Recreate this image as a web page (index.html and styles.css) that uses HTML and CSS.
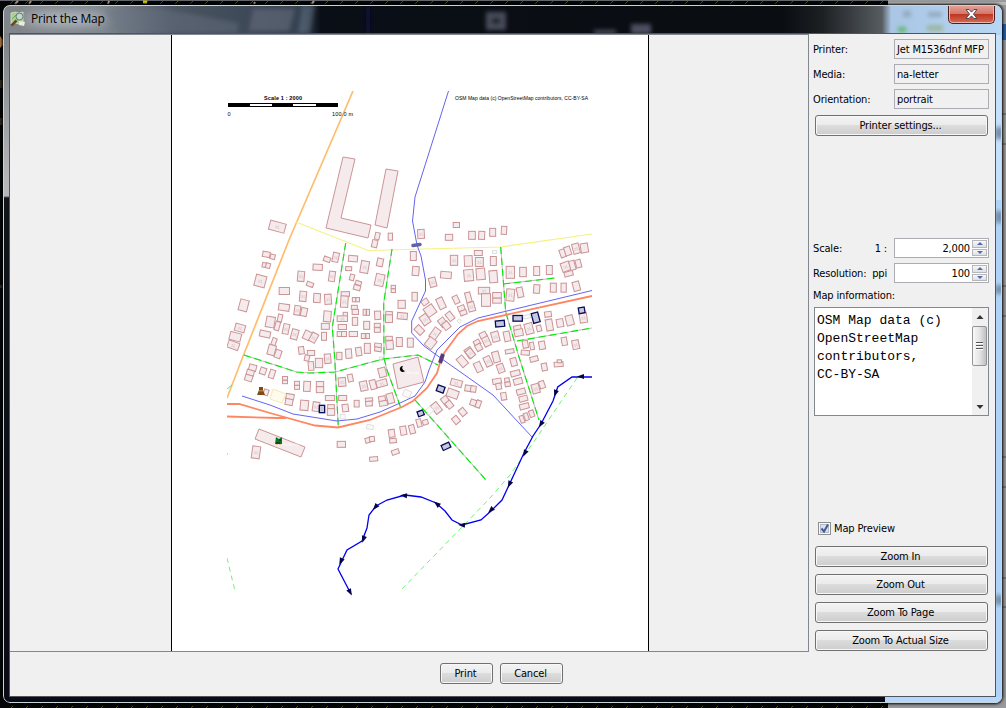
FILE: index.html
```html
<!DOCTYPE html>
<html lang="en">
<head>
<meta charset="utf-8">
<title>Print the Map</title>
<link rel="stylesheet" href="styles.css">
</head>
<body>
<div class="desktop">
  <svg class="backdrop" width="1006" height="708">
    <defs>
      <pattern id="ticks" width="15" height="5" patternUnits="userSpaceOnUse"><path d="M10 4L13 1" stroke="#55551c"/></pattern>
    </defs>
    <rect width="1006" height="708" fill="#050607"/>
    <rect width="888" height="5" fill="url(#ticks)"/><rect y="703" width="888" height="5" fill="url(#ticks)"/>
    <path d="M0 .5H1006" stroke="#62666a"/>
    <path d="M15 4l3-3M29 4l2-3M108 4l1-3M254 4l1-2M312 4l2-3" stroke="#b89a80" stroke-width="2"/><path d="M143 2h4" stroke="#d4c500" stroke-width="3"/>
    <rect x="888" y="0" width="118" height="708" fill="#98999c"/>
    <rect x="888" y="2" width="118" height="3" fill="#b9b9b9"/>
    <rect x="1002" y="24" width="4" height="16" fill="#2460a5"/>
    <path d="M0 36l3 4v5l-3 3z" fill="#b07945"/>
    <path d="M0 80h3v8H0zM0 118h3v7H0zM0 285h3v3H0z" fill="#302b20"/>
    <path d="M1002 114h4M1002 144h4M1002 286h4M1002 316h4M1002 457h4M1002 487h4M1002 578h4M1002 607h4" stroke="#555"/>
  </svg>
  <div class="window">
    <svg class="glass" width="999" height="698">
      <defs>
        <linearGradient id="title" x2="1"><stop offset="0" stop-color="#81868a"/><stop offset=".1" stop-color="#7d858d"/><stop offset=".17" stop-color="#4c5561"/><stop offset=".22" stop-color="#424d5b"/><stop offset=".3" stop-color="#344150"/><stop offset=".318" stop-color="#0a0f17"/><stop offset=".78" stop-color="#0a0d11"/><stop offset=".82" stop-color="#1d2023"/><stop offset=".88" stop-color="#585d62"/><stop offset=".889" stop-color="#a9c6e4"/><stop offset="1" stop-color="#b8d7f5"/></linearGradient>
        <linearGradient id="side" x2="0" y2="1"><stop offset="0" stop-color="#7c8285"/><stop offset=".22" stop-color="#b4b6b8"/><stop offset=".245" stop-color="#b4b6b8"/><stop offset=".248" stop-color="#11151a"/><stop offset="1" stop-color="#0a0a16"/></linearGradient>
        <filter id="blur" x="-50%" y="-50%" width="200%" height="200%"><feGaussianBlur stdDeviation="2"/></filter>
        <filter id="haze" x="-50%" y="-50%" width="200%" height="200%"><feGaussianBlur stdDeviation="6"/></filter>
      </defs>
      <rect width="999" height="698" fill="#0b0a17"/>
      <rect width="999" height="30" fill="url(#title)"/>
      <ellipse cx="62" cy="14" rx="42" ry="7" fill="#c4cad0" opacity=".8" filter="url(#haze)"/>
      <g filter="url(#blur)">
        <path d="M160 4L235 18V28H120L100 5z" fill="#6c7587" opacity=".4"/>
        <path d="M250 4h42l-6 22h-40z" fill="#7c8091" opacity=".4"/>
        <path d="M300 0h12l-5 28h-12z" fill="#66788a" opacity=".5"/>
        <rect x="486" y="10" width="14" height="12" fill="#1f222c" stroke="#474b5a" stroke-width="6"/>
        <path d="M591 25h22v4h-22zM628 19h20v10h-20z" fill="#4c5060"/>
        <path d="M365 2v26" stroke="#0d1038" stroke-width="4"/>
        <path d="M900 6h8v6h-8zM925 7h14v5h-14z" fill="#93a8bd"/><path d="M895 22h8v5h-8z" fill="#62b66d"/><path d="M924 20h16v6h-16z" fill="#9cb69e"/>
      </g>
      <rect y="28" width="6" height="665" fill="url(#side)"/>
      <rect x="992" y="28" width="8" height="671" fill="#afd3f8"/>
      <rect x="992" y="30" width="8" height="165" fill="#c5e0fa"/>
      <rect x="882" y="692" width="118" height="7" fill="#b4d7fb"/>
      <g filter="url(#blur)" fill="#758da9"><path d="M992 122h8v12h-8zM992 206h8v12h-8zM992 280h8v9h-8zM992 590h8v10h-8z"/></g>
    </svg>
    <header class="titlebar">
      <svg class="app-icon" width="16" height="16" viewBox="0 0 16 16"><path d="M1 2l4-1 4 1 4-1v11l-4 1-4-1-4 1z" fill="#a9cf92" stroke="#e0ead2" stroke-width=".7"/><path d="M2 8l6-6M5 12L12 3" stroke="#6daa58"/><path d="M9 10l6 1-1 4-5-1z" fill="#eee8df"/><circle cx="9.5" cy="5.5" r="3.5" fill="#bcdcc9" stroke="#66777a" stroke-width="1"/><path d="M6.500 9.500l-5 5" stroke="#6e4525" stroke-width="2.500"/></svg>
      <span class="title">Print the Map</span>
      <button class="close" aria-label="Close"><svg width="13" height="12" viewBox="0 0 13 12"><path d="M1 1.500h3l2.500 2.600L9 1.500h3L8.500 6l3.500 4.500H9L6.500 7.900 4 10.500H1L4.500 6z" fill="#fff" stroke="#4c4c58" stroke-width="1"/></svg></button>
    </header>
    <main class="content">
      <div class="upper">
        <section class="preview">
          <div class="paper">
            <svg class="map" viewBox="172 35 476 616" width="476" height="616">
              <defs><clipPath id="sheet"><path d="M227 91H592V596H227z"/></clipPath></defs>
              <g clip-path="url(#sheet)" fill="none">
                <g id="buildings"></g>
                <path d="M343 157L355 159 341 218 371 225 368 238 326 228zM386 169L398 171 387 228 375 225zM259 429L305 447 301 457 255 439zM393 364L418 357 424 382 398 389z" class="house"/>
                <path d="M273 389L286 394 282 403 270 399z" stroke="#f3eab6" fill="#fffbed"/>
                <path d="M353 91L296.700 222 289 240 242 359 227 398" stroke="#ffbd6e" stroke-width="1.700"/>
                <path d="M296 222L368 250.500 500.500 247 592 234" stroke="#f6f183" stroke-width="1.200"/>
                <path class="road" d="M345.700 243L332.300 327 334.700 358 338.300 427M392 249L383.700 303 384 358 387 370 400.500 407M244 355L296.700 372 310 373 335 372 383 359 418 355 438 365M500.700 247L505.700 312 519 357 539 420M503 284L555 278M517 341L592 328M415 400L486 480"/>
                <path class="track" d="M345.700 243L332.300 327 334.700 358 338.300 427M392 249L383.700 303 384 358 387 370 400.500 407M244 355L296.700 372 310 373 335 372 383 359 418 355 438 365M500.700 247L505.700 312 519 357 539 420M503 284L555 278M517 341L592 328M415 400L486 480"/>
                <path d="M227 404H239L277 415 315 425.500 338 427.500 370 420 402 407 413 401 427 388 437 373 442 356 458 334 467 326 478 321 592 296M227 416.500L277 418 286 418" stroke="#ff8663" stroke-width="1.800"/>
                <path d="M448.500 91L415 197 412.500 221 417 245 421 256 425.500 280V291L411.700 321V333L424 346 442 359 493 395 532 437M242 396L270 405 293 414 337 421 357 419 380 412 400 403 415 396 425 382 429 370 437 350 450 337 460 327 478 318 592 290.500" stroke="#6464f2"/>
                <path d="M577 378L535 440 510 475 490 498 465 524 430 560 400 591M227 558L235 591" stroke="#63ed63" stroke-dasharray="5 4" stroke-width=".9"/>
                <path d="M413 245.500l7-1" stroke="#6262a4" stroke-width="3.500" stroke-linecap="round"/><path d="M440 363l3-9" stroke="#5e3a74" stroke-width="4"/>
                <path d="M592 377L572 377 557.700 387 553 401 541 424 533 436 524 453 510 483 502 500 491 511 481 520 462 525 452 520 445 511 436 503 421 497 405 495 387 500 376 506 369 515 367 528 362 541 347 550 338 569 351 594" stroke="#0000f2" stroke-width="1.300"/>
                <g id="arrows" fill="#060646"></g>
                <g fill="#7e4b18"><path d="M259 387h4v3l2 5h-8l2-5z"/><path d="M259 390h4v1.500h-4z" fill="#a9823a"/></g>
                <path d="M276 437l3 2 3-2v7h-7z" fill="#067826"/><path d="M279 440h2M276 443h4" stroke="#052b11"/><path d="M277 444v1m3 0v-1" stroke="#ff9b20"/>
                <path d="M403 366a3 3 0 1 0 2 5 3 3 0 0 1-2-5z" fill="#000"/>
                <text x="283" y="446" class="tiny">SCHOOL</text><text x="407" y="374" class="tiny">Masjid</text>
                <path d="M227 389l5-4M227 453v2" stroke="#61e161"/>
              </g>
              <path d="M228.500 103.500H337.500V106.500H228.500z" fill="#fff" stroke="#000"/><path d="M228 103h22v4h-22zM272 103h21v4h-21zM316 103h22v4h-22z"/>
              <g class="map-text"><text x="264" y="100" class="strong" textLength="38">Scale 1 : 2000</text><text x="227.500" y="116">0</text><text x="332" y="116" textLength="21">100.0 m</text><text x="455" y="100" textLength="133" class="credit">OSM Map data (c) OpenStreetMap contributors, CC-BY-SA</text></g>
            </svg>
          </div>
        </section>
        <aside class="options">
          <div class="row"><label>Printer:</label><div class="field printer">Jet M1536dnf MFP</div></div>
          <div class="row"><label>Media:</label><div class="field">na-letter</div></div>
          <div class="row"><label>Orientation:</label><div class="field">portrait</div></div>
          <button class="button wide settings">Printer settings...</button>
          <div class="row"><label>Scale:</label><label class="unit">1 :</label><div class="field number">2,000<span class="spin"><i class="up"></i><i class="down"></i></span></div></div>
          <div class="row"><label>Resolution:</label><label class="unit">ppi</label><div class="field number">100<span class="spin"><i class="up"></i><i class="down"></i></span></div></div>
          <label class="info-label">Map information:</label>
          <div class="info"><pre>OSM Map data (c)
OpenStreetMap
contributors,
CC-BY-SA</pre>
            <div class="scroll"><svg width="16" height="107" viewBox="0 0 16 107"><defs><linearGradient id="thumb"><stop stop-color="#fafafa"/><stop offset=".5" stop-color="#e4e4e6"/><stop offset="1" stop-color="#bcbdc1"/></linearGradient></defs><path d="M4.500 11L8 7l3.500 4zM4.500 97h7L8 101z" fill="#333"/><rect x=".5" y="18.500" width="14" height="39" rx="1.500" fill="url(#thumb)" stroke="#929297"/><path d="M4 34.500h7M4 37.500h7M4 40.500h7" stroke="#555"/><path d="M4 35.500h7M4 38.500h7M4 41.500h7" stroke="#fff"/></svg></div>
          </div>
          <div class="check"><svg width="13" height="13"><rect x=".5" y=".5" width="12" height="12" fill="#f8f8f8" stroke="#8e8f8f"/><rect x="2.500" y="2.500" width="8" height="8" fill="#dce0e8" stroke="#b5bbc5"/><path d="M3.500 6.500l2.500 3L10 2.500" fill="none" stroke="#435b9c" stroke-width="2"/></svg><label>Map Preview</label></div>
          <div class="zoom-buttons"><button class="button wide">Zoom In</button><button class="button wide">Zoom Out</button><button class="button wide">Zoom To Page</button><button class="button wide">Zoom To Actual Size</button></div>
        </aside>
      </div>
      <footer><button class="button print">Print</button><button class="button cancel">Cancel</button></footer>
    </main>
  </div>
</div>
<script src="map.js"></script>
</body>
</html>
```

FILE: map.js
```js
// Building blocks: each tile has an origin and lists cx,cy,w,h,angle in thirds of a pixel.
const tiles = [
  [220, 80, "172,440,48,28,15 472,468,14,20,12 464,491,16,22,12 511,470,13,21"],
  [400, 80, "63,462,20,27,-3 147,472,22,18 169,435,19,15 216,466,20,24 245,466,18,24,3 278,457,18,24 312,451,16,24,3"],
  [220, 240, "139,43,22,16,10 158,50,14,14,15 133,75,12,14,12 144,77,13,15,15 121,123,32,34,15 71,196,26,34,15 60,264,30,22,15 46,290,34,24,15 40,316,34,22,20 321,58,20,14,20 347,52,18,28,12 293,82,28,18,3 243,109,20,30,5 270,133,20,13,20 336,109,18,30,8 399,56,27,18,5 386,86,18,12,3 396,112,13,18,15 434,81,24,36,10 480,67,18,24,12 479,120,26,36,12 415,129,18,12,20 411,143,20,15,15 193,153,31,21 249,169,20,30,5 291,174,20,27,3 324,178,20,30,-4 376,162,25,14 373,185,22,34,3 402,179,10,13 413,179,11,13 520,141,13,10 520,152,13,11 192,202,32,20,8 232,211,18,28,8 252,216,18,25,12 403,202,18,12 406,216,19,15 434,217,9,18 444,217,9,18 473,226,18,25,-3 376,224,13,14 367,236,31,17 322,229,22,32,5 405,244,16,24 507,222,20,15,5 507,236,21,23 545,193,22,24 547,228,30,19,5 151,246,26,32,10 180,234,13,22,12 172,258,14,26,15 198,267,18,30,12 135,282,32,18,12 224,283,20,30,15 262,286,22,26,25 281,293,20,28,30 316,259,24,18 312,289,15,24 367,261,25,15 358,282,13,15 372,282,15,15 400,282,25,15 430,288,12,15 443,288,11,15 440,256,18,24 472,256,18,12 472,270,18,14 162,305,13,22,20 155,330,22,30,15 174,342,18,24,20 244,331,16,22,-8 273,339,22,15 442,325,18,30 416,335,17,25,-8 386,341,18,28,-5 474,316,20,12,5 474,328,20,12,10 507,295,20,12 509,315,22,26,-5 538,306,18,27 358,348,16,22"],
  [400, 240, "40,48,18,27 47,93,20,27,5 44,170,16,26 31,308,18,27 98,127,20,28,-15 138,105,32,20,5 162,61,22,30 205,63,24,32,-3 206,106,28,34,-5 235,39,24,15 238,66,24,27 242,102,26,34,-5 280,63,18,27 280,110,24,36,-5 331,97,25,36 369,96,20,28 410,93,18,27 448,90,18,27 488,40,16,24,-20 503,33,18,26,-18 528,26,20,30,-15 553,24,22,27,-10 497,80,26,27,-20 517,76,16,28,-15 535,71,16,24,-15 506,101,26,14,-15 252,152,34,20 258,180,27,38 291,166,26,17 291,182,26,15 331,165,24,36,5 360,157,18,30,-12 410,147,18,26,5 460,143,18,27 491,143,16,27 529,139,20,28,-15 75,186,20,16,-35 123,190,20,34,-25 168,179,16,24,-25 205,172,16,30,-15 214,200,20,28,-15 184,205,20,16,-20 190,218,20,14,-20 90,212,30,30,-35 75,239,24,30,-35 58,270,20,26,-45 105,281,22,34,35 92,309,26,30,38 128,247,20,26,-38 139,257,20,22,-38 150,229,18,26,-38 209,338,22,30,-35 231,308,18,16,-30 236,322,18,20,-30 258,302,20,34,-25 249,285,20,16,-25 286,290,22,30,-15 321,289,18,30,-12 352,263,22,13,-12 356,278,26,20,-12 387,266,24,32,-15 417,265,14,18,-15 444,223,20,16,-8 448,255,20,34,-10 480,249,20,24,-10 509,241,22,30,-15 550,233,22,30,-8 493,304,16,24,-10 527,314,20,27,-12 426,316,18,24,-10 376,313,16,22,-10 396,318,12,22,-10"],
  [220, 350, "323,26,19,28,-5 297,39,22,28 273,48,16,26,-5 261,24,14,18,12 98,53,22,18,15 91,68,22,16,15 86,84,22,18,18 129,63,18,20,20 156,72,16,26,18 195,85,15,11 195,96,15,10 231,100,15,12 231,112,15,12 261,109,20,30,3 300,102,22,15 300,119,22,18 366,96,22,26,-5 391,84,15,22,-12 431,108,22,28,-12 459,104,18,28,-15 485,100,32,20,-15 487,67,22,28,-15 138,127,14,18,18 210,140,24,16,10 207,156,22,18,10 253,166,24,30,5 288,170,20,28,8 333,170,20,12 333,186,22,20 330,144,28,15 368,144,24,15 376,174,18,22,-8 410,161,15,20 447,149,22,10,-5 447,161,20,14,-5 486,146,20,15,-10 490,160,24,15,-10 511,145,20,30,-15 108,307,24,36,8 364,283,25,18 443,271,14,15,-15 456,267,15,15,-5 515,250,18,23,-8 519,272,20,13,-5 526,306,22,14,-20 461,327,24,13,-5"],
  [400, 350, "10,242,18,26,-10 36,238,16,26,-15 57,219,14,24,-15 76,217,16,14,-20 109,174,22,32,-38 138,154,20,30,-38 148,164,18,22,-38 158,131,34,24,20 169,99,34,20,15 206,115,22,18,8 220,117,16,18,8 220,158,18,18,20 235,162,14,22,20 188,186,18,22,-40 168,210,18,22,-40 187,34,22,32,-40 211,10,20,26,-40 235,51,20,30,-25 264,34,20,30,-25 288,21,20,32,-15 302,55,20,26,-20 341,36,18,24,-15 329,4,26,12,-10 376,8,25,14,5 402,27,24,15,-15 433,51,16,22,-10 476,43,27,14,-5 478,34,13,9 346,70,28,16,-15 354,94,26,18,-15 291,94,26,16,-10 296,109,16,18,-10 321,90,14,12,-10 323,103,16,13,-10 311,139,16,22,-10 363,125,26,16,-15 370,146,25,16,-15 373,169,28,16,-15 407,116,22,28,-15 426,104,16,22,-20 366,208,12,22,-20 379,200,12,22,-20 395,191,14,20,-20"]
];
const landmarks = [
  [400, 240, "navy", "300,251,27,18,-5 353,235,28,17,0 407,233,20,30,-15 545,211,18,17,-10"],
  [400, 350, "navy", "122,117,22,18,20 62,190,18,15,-20 138,289,25,16,-25"],
  [220, 350, "navy", "306,177,16,22"],
  [400, 240, "pale", "284,36,13,9 381,230,22,10,-12 178,243,10,10,45"],
  [220, 350, "pale", "368,200,15,14 450,231,20,13,10 484,26,12,10"],
  [400, 350, "pale", "21,131,22,20,25 87,183,24,18,-45"]
];
const group = document.getElementById("buildings");
function addShapes(x, y, cls, data) {
  data.split(" ").forEach((entry, i) => {
    const [cx, cy, w, h, angle = 0] = entry.split(",").map(Number);
    const at = `translate(${x + cx / 3} ${y + cy / 3}) rotate(${angle})`;
    const label = cls === "house" && w * h > 500 && i % 2 === 0
      ? `<path d="M-2 -.5h1.500v2h-1.500M1 -1.500v3h1.500" transform="${at}" stroke="#d9c4c7" stroke-width=".6"/>` : "";
    group.insertAdjacentHTML("beforeend",
      `<rect class="${cls}" x="${-w / 6}" y="${-h / 6}" width="${w / 3}" height="${h / 3}" transform="${at}"/>${label}`);
  });
}
tiles.forEach(([x, y, data]) => addShapes(x, y, "house", data));
landmarks.forEach(([x, y, cls, data]) => addShapes(x, y, cls, data));

// Flow direction markers along the river: x, y, heading in degrees.
const arrows = [[581,376.5,180],[555.5,393,108],[541,424,122],[525,453,116],[509.5,484,115],[491,510,135],[462,525,185],[437,504,218],[404,495.5,185],[375.5,507,130],[363.5,539,108],[341,561,115],[350,592,62]];
document.getElementById("arrows").innerHTML = arrows.map(([x, y, a]) =>
  `<path d="M4 0L-3 -2.600V2.600z" transform="translate(${x} ${y}) rotate(${a})"/>`).join("");
```

FILE: styles.css
```css
* { box-sizing: border-box; }
body { margin: 0; overflow: hidden; font-family: "DejaVu Sans Condensed", "DejaVu Sans", sans-serif; font-size: 11px; letter-spacing: -.15px; color: #000; }
button { font: inherit; letter-spacing: inherit; color: inherit; padding: 0; margin: 0; }
.desktop { position: relative; width: 1006px; height: 708px; padding: 5px 3px; }
.backdrop, .glass { position: absolute; left: 0; top: 0; display: block; }
.window { position: relative; width: 999px; height: 698px; border-radius: 7px; overflow: hidden; display: flex; flex-direction: column; box-shadow: 0 0 3px 1px #000; }
.window::after { content: ""; position: absolute; inset: 0; border: 1px solid #c7d4d8; border-radius: 7px; pointer-events: none; }
.titlebar { position: relative; height: 28px; display: flex; padding: 0 7px; }
.app-icon { margin-top: 6px; }
.title { margin: 5px 0 0 5px; font: 12px/18px "Open Sans", "Noto Sans", sans-serif; letter-spacing: -.2px; }
.close { margin-left: auto; width: 47px; height: 19px; border: 1px solid #4f1c1a; border-top: 0; border-radius: 0 0 5px 5px; background: linear-gradient(#e4a39a, #d4776a 48%, #bd3421 50%, #d36b54); box-shadow: inset 0 0 0 1px #edb4a9; display: grid; place-items: center; }
.content { position: relative; margin-left: 6px; width: 987px; height: 664px; background: #f0f0f0; border: 1px solid #50545e; display: flex; flex-direction: column; }
.upper { display: flex; height: 618px; }
.preview { width: 799px; height: 618px; border: 1px solid #828790; border-left: 0; display: flex; padding-left: 161px; }
.paper { width: 478px; background: #fff; border: solid #000; border-width: 0 1px; }
.map { display: block; letter-spacing: 0; }
.house { fill: #f5eaec; stroke: #cb9496; stroke-width: 1; }
.navy { fill: #c7cadd; stroke: #0b0b5b; stroke-width: 1.3; }
.pale { fill: #fafafa; stroke: #d5d5d5; stroke-width: .7; }
.road { stroke: #c4bfc4; stroke-width: 1.1; }
.track { stroke: #00ed00; stroke-width: 1.1; stroke-dasharray: 7 4; }
.map-text { font: 5.5px "Liberation Sans", sans-serif; fill: #000; }
.strong { font-weight: bold; }
.credit { font-size: 5px; }
.tiny { font: 4px "Liberation Sans", sans-serif; fill: #fff; }
.options { width: 186px; padding: 5px 6px 0 4px; display: flex; flex-direction: column; }
.row { display: flex; align-items: center; height: 20px; margin-bottom: 5px; }
.unit { margin-left: auto; padding-right: 7px; }
.field { width: 95px; height: 20px; border: 1px solid #abadb3; padding-left: 2px; line-height: 19px; white-space: nowrap; overflow: hidden; margin-left: auto; }
.unit + .field { margin-left: 0; }
.printer { letter-spacing: -.15px; }
.number { display: flex; justify-content: flex-end; background: #fff; }
.spin { width: 15px; margin: 1px 1px 1px 2px; display: flex; flex-direction: column; gap: 1px; }
.spin i { flex: 1; border: 1px solid #b5b7bd; background: linear-gradient(#f8f8f8, #dedfe2); display: grid; place-items: center; }
.spin i::after { content: ""; border: 3px solid transparent; }
.up::after { border-bottom-color: #526dae !important; border-top-width: 0 !important; }
.down::after { border-top-color: #526dae !important; border-bottom-width: 0 !important; }
.button { height: 21px; border: 1px solid #707070; border-radius: 3px; background: linear-gradient(#f3f3f3, #ebebeb 48%, #dcdcdc 50%, #cdcdcd); box-shadow: inset 0 0 0 1px #f7f7f7; line-height: 18px; }
.wide { width: 173px; margin-left: 2px; padding-right: 2px; }
.settings { margin-top: 1px; margin-bottom: 102px; flex-shrink: 0; }
.info-label { height: 19px; line-height: 15px; }
.info { width: 175px; height: 109px; margin-left: 1px; border: 1px solid #828790; background: #fff; display: flex; justify-content: space-between; flex-shrink: 0; }
.info pre { margin: 4px 0 0 2px; font: 13px/18px "Liberation Mono", monospace; letter-spacing: 0; }
.scroll { width: 16px; background: #f0f0f0; }
.check { height: 14px; margin: 105px 0 11px 5px; display: flex; align-items: center; gap: 3px; }
.zoom-buttons { display: flex; flex-direction: column; gap: 7px; }
footer { display: flex; justify-content: center; gap: 7px; padding: 11px 2px 0 0; }
.button.print { width: 53px; padding-right: 2px; }
.cancel { width: 63px; padding-right: 2px; }
```
